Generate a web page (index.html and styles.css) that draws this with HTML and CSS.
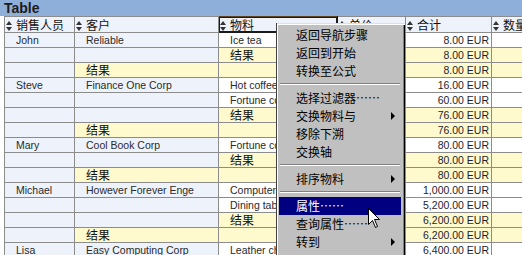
FILE: index.html
```html
<!DOCTYPE html>
<html>
<head>
    <meta charset="utf-8">
    <title>Table</title>
    <link rel="stylesheet" href="styles.css">
</head>
<body>
    <div class="report">
        <div class="title">Table</div>
        <table class="grid">
            <colgroup>
                <col class="c1"><col class="c2"><col class="c3"><col class="c4"><col class="c5"><col class="c6">
            </colgroup>
            <thead>
                <tr>
                    <th><svg class="sort" width="6" height="10" viewBox="0 0 6 10"><path d="M3 0L6 4H0Z M0 6H6L3 10Z"/></svg>销售人员</th>
                    <th><svg class="sort" width="6" height="10" viewBox="0 0 6 10"><path d="M3 0L6 4H0Z M0 6H6L3 10Z"/></svg>客户</th>
                    <th class="active"><svg class="sort" width="6" height="10" viewBox="0 0 6 10"><path d="M3 0L6 4H0Z M0 6H6L3 10Z"/></svg>物料</th>
                    <th><svg class="sort" width="6" height="10" viewBox="0 0 6 10"><path d="M3 0L6 4H0Z M0 6H6L3 10Z"/></svg>单价</th>
                    <th><svg class="sort" width="6" height="10" viewBox="0 0 6 10"><path d="M3 0L6 4H0Z M0 6H6L3 10Z"/></svg>合计</th>
                    <th><svg class="sort" width="6" height="10" viewBox="0 0 6 10"><path d="M3 0L6 4H0Z M0 6H6L3 10Z"/></svg>数量</th>
                </tr>
            </thead>
            <tbody>
                <tr><td>John</td><td>Reliable</td><td class="val">Ice tea</td><td class="val"></td><td class="val num">8.00 EUR</td><td class="val num">4</td></tr>
                <tr><td></td><td></td><td class="sum cjk">结果</td><td class="sum"></td><td class="sum num">8.00 EUR</td><td class="sum num">4</td></tr>
                <tr><td></td><td class="sum cjk">结果</td><td class="sum"></td><td class="sum"></td><td class="sum num">8.00 EUR</td><td class="sum num">4</td></tr>
                <tr><td>Steve</td><td>Finance One Corp</td><td class="val">Hot coffee</td><td class="val"></td><td class="val num">16.00 EUR</td><td class="val num">8</td></tr>
                <tr><td></td><td></td><td class="val">Fortune cookies</td><td class="val"></td><td class="val num">60.00 EUR</td><td class="val num">12</td></tr>
                <tr><td></td><td></td><td class="sum cjk">结果</td><td class="sum"></td><td class="sum num">76.00 EUR</td><td class="sum num">20</td></tr>
                <tr><td></td><td class="sum cjk">结果</td><td class="sum"></td><td class="sum"></td><td class="sum num">76.00 EUR</td><td class="sum num">20</td></tr>
                <tr><td>Mary</td><td>Cool Book Corp</td><td class="val">Fortune cookies</td><td class="val"></td><td class="val num">80.00 EUR</td><td class="val num">16</td></tr>
                <tr><td></td><td></td><td class="sum cjk">结果</td><td class="sum"></td><td class="sum num">80.00 EUR</td><td class="sum num">16</td></tr>
                <tr><td></td><td class="sum cjk">结果</td><td class="sum"></td><td class="sum"></td><td class="sum num">80.00 EUR</td><td class="sum num">16</td></tr>
                <tr><td>Michael</td><td>However Forever Enge</td><td class="val">Computer</td><td class="val"></td><td class="val num">1,000.00 EUR</td><td class="val num">20</td></tr>
                <tr><td></td><td></td><td class="val">Dining table</td><td class="val"></td><td class="val num">5,200.00 EUR</td><td class="val num">52</td></tr>
                <tr><td></td><td></td><td class="sum cjk">结果</td><td class="sum"></td><td class="sum num">6,200.00 EUR</td><td class="sum num">72</td></tr>
                <tr><td></td><td class="sum cjk">结果</td><td class="sum"></td><td class="sum"></td><td class="sum num">6,200.00 EUR</td><td class="sum num">72</td></tr>
                <tr><td>Lisa</td><td>Easy Computing Corp</td><td class="val">Leather chair</td><td class="val"></td><td class="val num">6,400.00 EUR</td><td class="val num">32</td></tr>
            </tbody>
        </table>
    </div>

    <div class="menu">
        <div class="item">返回导航步骤</div>
        <div class="item">返回到开始</div>
        <div class="item">转换至公式</div>
        <div class="sep"></div>
        <div class="item">选择过滤器……</div>
        <div class="item">交换物料与<span class="arrow"></span></div>
        <div class="item">移除下溯</div>
        <div class="item">交换轴</div>
        <div class="sep"></div>
        <div class="item">排序物料<span class="arrow"></span></div>
        <div class="sep"></div>
        <div class="item on">属性……</div>
        <div class="item">查询属性……</div>
        <div class="item">转到<span class="arrow"></span></div>
    </div>

    <svg class="cursor" width="13" height="21" viewBox="0 0 13 21">
        <path d="M0.5 0.5V16.5L4.5 12.5L7.5 19.5L9.5 18.5L6.5 11.5H11.5Z" fill="#fff" stroke="#000"/>
    </svg>
</body>
</html>
```

FILE: styles.css
```css
html, body{
    margin: 0;
    width: 522px;
    height: 255px;
    overflow: hidden;
    background-color: white;
}

body{
    position: relative;
    font-family: "Liberation Sans", Arial, sans-serif;
    font-size: 10.5px;
    color: #2a2a2a;
}

.title{
    height: 16px;
    padding-left: 4px;
    background-color: #8eafda;
    color: #1c1c1c;
    font-weight: bold;
    font-size: 14px;
    line-height: 16px;
}

.grid{
    border-collapse: collapse;
    table-layout: fixed;
    width: 560px;
    margin-left: 4px;
}

.c1{ width: 70px; }
.c2{ width: 144px; }
.c3{ width: 119px; }
.c4{ width: 68px; }
.c5{ width: 86px; }
.c6{ width: 73px; }

.grid th,
.grid td{
    border: 1px solid #8c8c8c;
    padding: 0 2px 0 11px;
    height: 14px;
    line-height: 14px;
    white-space: nowrap;
    overflow: hidden;
    background-color: #eef3fb;
}

.grid th{
    height: 15px;
    padding-left: 1px;
    text-align: left;
    font-weight: normal;
    font-family: "Noto Sans CJK SC", sans-serif;
    font-size: 12px;
    color: #111;
}

.grid th.active{
    border-color: #1a1a1a;
    border-top-color: #5c4322;
    box-shadow: inset 0 0 0 1px #1a1a1a;
}

.sort{
    vertical-align: -1px;
    margin-right: 4px;
    fill: #333;
}

.grid td.val{
    background-color: white;
}

.grid td.sum{
    background-color: #fffacd;
}

.grid td.num{
    text-align: right;
    color: #1e1e2e;
}

.grid td.cjk{
    font-family: "Noto Sans CJK SC", sans-serif;
    font-size: 12px;
    color: #111;
}

.menu{
    position: absolute;
    left: 276px;
    top: 23px;
    width: 129px;
    padding: 3px 4px 20px 3px;
    box-sizing: border-box;
    background-color: #c0c0c0;
    box-shadow: inset 1px 0 0 #404040, inset 0 1px 0 #dfdfdf, inset 2px 2px 0 white, inset -1px -1px 0 #000, inset -2px -2px 0 #808080;
    font-family: "Noto Sans CJK SC", sans-serif;
    font-size: 12px;
    color: black;
}

.item{
    display: flex;
    justify-content: space-between;
    align-items: center;
    height: 18px;
    line-height: 18px;
    padding-left: 17px;
    padding-right: 6px;
}

.item.on{
    background-color: #000080;
    color: white;
}

.arrow{
    width: 0;
    height: 0;
    border-left: 4px solid black;
    border-top: 4px solid transparent;
    border-bottom: 4px solid transparent;
}

.sep{
    height: 2px;
    margin: 3px 1px 4px 1px;
    border-top: 1px solid #808080;
    border-bottom: 1px solid white;
    box-sizing: border-box;
}

.cursor{
    position: absolute;
    left: 368px;
    top: 208px;
}
```
